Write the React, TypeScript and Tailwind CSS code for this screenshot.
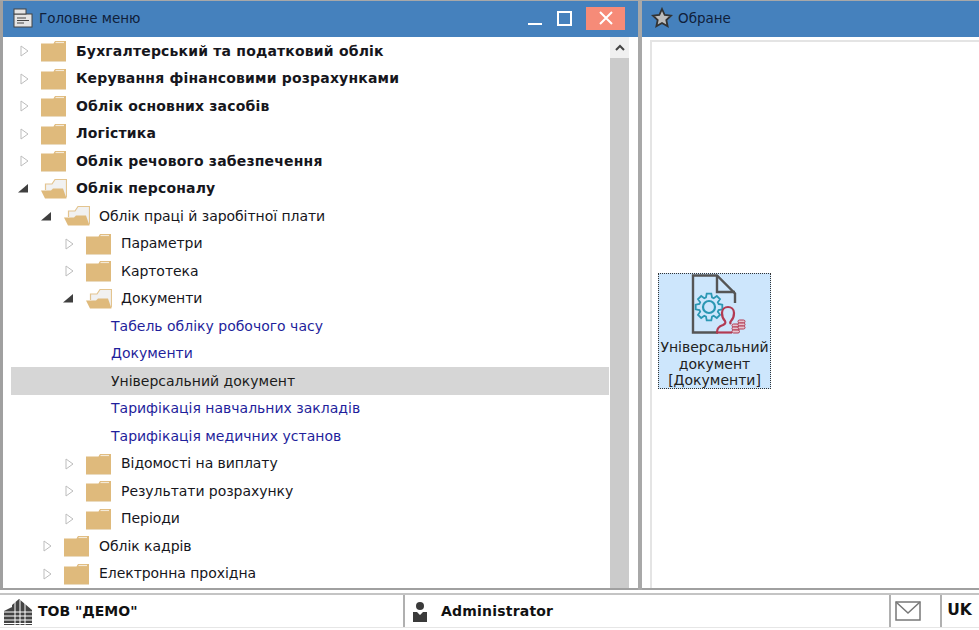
import type { ReactNode } from "react";

type Row = {
  label: string;
  depth: number;
  kind: "closed" | "open" | "leaf";
  bold?: boolean;
  selected?: boolean;
};

const rows: Row[] = [
  { label: "Бухгалтерський та податковий облік", depth: 0, kind: "closed", bold: true },
  { label: "Керування фінансовими розрахунками", depth: 0, kind: "closed", bold: true },
  { label: "Облік основних засобів", depth: 0, kind: "closed", bold: true },
  { label: "Логістика", depth: 0, kind: "closed", bold: true },
  { label: "Облік речового забезпечення", depth: 0, kind: "closed", bold: true },
  { label: "Облік персоналу", depth: 0, kind: "open", bold: true },
  { label: "Облік праці й заробітної плати", depth: 1, kind: "open" },
  { label: "Параметри", depth: 2, kind: "closed" },
  { label: "Картотека", depth: 2, kind: "closed" },
  { label: "Документи", depth: 2, kind: "open" },
  { label: "Табель обліку робочого часу", depth: 3, kind: "leaf" },
  { label: "Документи", depth: 3, kind: "leaf" },
  { label: "Універсальний документ", depth: 3, kind: "leaf", selected: true },
  { label: "Тарифікація навчальних закладів", depth: 3, kind: "leaf" },
  { label: "Тарифікація медичних установ", depth: 3, kind: "leaf" },
  { label: "Відомості на виплату", depth: 2, kind: "closed" },
  { label: "Результати розрахунку", depth: 2, kind: "closed" },
  { label: "Періоди", depth: 2, kind: "closed" },
  { label: "Облік кадрів", depth: 1, kind: "closed" },
  { label: "Електронна прохідна", depth: 1, kind: "closed" },
];

// outline of a cog, 8 teeth
function gearPath(cx: number, cy: number, inner: number, outer: number) {
  const pts: string[] = [];
  for (let i = 0; i < 8; i++) {
    const a = (i * Math.PI) / 4;
    [
      [-0.3, inner],
      [-0.17, outer],
      [0.17, outer],
      [0.3, inner],
    ].forEach(([off, r]) => {
      pts.push(`${(cx + r * Math.cos(a + off)).toFixed(1)} ${(cy + r * Math.sin(a + off)).toFixed(1)}`);
    });
  }
  return `M${pts.join("L")}z`;
}

function ClosedFolder() {
  return (
    <svg width="26" height="22" viewBox="0 0 26 22" className="shrink-0">
      <path d="M0 3.500h12.500l1.500-2.500H25v20H0z" fill="#dfba7c" />
      <path d="M14.500 2.500h8.500" stroke="#f4ead8" strokeWidth="1.200" />
      <path d="M0 21.500h25" stroke="#eadbc0" />
    </svg>
  );
}

function OpenFolder() {
  return (
    <svg width="26" height="22" viewBox="0 0 26 22" className="shrink-0">
      <path d="M4.500 12V6h6.500l3-4.500h11.500v18" fill="#f1f1f1" stroke="#e3c48f" strokeWidth="1.200" />
      <path d="M0 12.500h10l2-2h10L25.500 20.500H4z" fill="#dfba7c" />
    </svg>
  );
}

function Arrow({ open }: { open: boolean }) {
  if (open) {
    return (
      <svg width="10" height="9" viewBox="0 0 10 9" className="shrink-0 -ml-[1px]">
        <path d="M0 8.500h10V0z" fill="#3f3f3f" />
      </svg>
    );
  }
  return (
    <svg width="9" height="12" viewBox="0 0 9 12" className="shrink-0 ml-[1px]">
      <path d="M1 1l7 5-7 5z" fill="#fff" stroke="#bdbdbd" />
    </svg>
  );
}

function TreeRow({ row }: { row: Row }) {
  const indent = [0, 23, 45, 0][row.depth];
  if (row.kind === "leaf") {
    return (
      <div
        className={`h-[27.5px] shrink-0 flex items-center pl-[100px] pt-[1px] ${
          row.selected ? "bg-[#d6d6d6] text-[#1c1c1c]" : "text-[#1f1f9c]"
        }`}
      >
        {row.label}
      </div>
    );
  }
  return (
    <div className="h-[27.5px] shrink-0 flex items-center pt-[1px] text-[#16161c]" style={{ paddingLeft: indent }}>
      <div className="w-[30px] pl-[8px] flex items-center justify-start">
        <Arrow open={row.kind === "open"} />
      </div>
      {row.kind === "open" ? <OpenFolder /> : <ClosedFolder />}
      <span className={`ml-[9px] ${row.bold ? "font-bold tracking-[0.18px]" : "tracking-[-0.05px]"}`}>{row.label}</span>
    </div>
  );
}

function TitleBar({ children }: { children: ReactNode }) {
  return (
    <div className="h-[36px] shrink-0 bg-[#4581bd] flex items-center pb-[2px] text-[#10203a] text-[13.5px]">
      {children}
    </div>
  );
}

function DocIcon() {
  return (
    <svg width="58" height="64" viewBox="0 0 58 64">
      <path d="M29 60.500H4V3.500h24l18 18V31" fill="none" stroke="#555" strokeWidth="2.400" />
      <path d="M28 3.500V20h18" fill="none" stroke="#555" strokeWidth="2.400" />
      <path d={gearPath(20, 35, 10, 13.500)} fill="#cde6fc" stroke="#2b97b3" strokeWidth="1.800" />
      <circle cx="20" cy="35" r="6" fill="none" stroke="#2b97b3" strokeWidth="2.200" />
      <path
        d="M28 60c0-4 3-6 6-7 2-1 3-2 2-4-2-2-3-5-3-8 0-4 3-6 6-6s6 2 6 6c0 3-1 6-3 8-1 1-1 2 0 3"
        fill="#cde6fc"
        stroke="#b23a52"
        strokeWidth="2.200"
      />
      <path d="M27 60.500h16" stroke="#b23a52" strokeWidth="2.200" />
      <g fill="#e6c3ce" stroke="#b23a52" strokeWidth="1">
        <rect x="43" y="52" width="7.500" height="3" rx="1.500" />
        <rect x="43" y="55" width="7.500" height="3" rx="1.500" />
        <rect x="43" y="58" width="7.500" height="3" rx="1.500" />
        <rect x="49" y="48" width="7" height="3" rx="1.500" />
        <rect x="49" y="51" width="7" height="3" rx="1.500" />
        <rect x="49" y="54" width="7" height="3" rx="1.500" />
      </g>
    </svg>
  );
}

export default function App() {
  return (
    <div className="w-[979px] h-[630px] overflow-hidden bg-white flex flex-col font-['DejaVu_Sans',Verdana,sans-serif] text-[14px]">
      <div className="h-[590px] shrink-0 flex border-t border-[#a8a8a8]">
        {/* Головне меню */}
        <div className="w-[638px] shrink-0 flex flex-col border-l-[3px] border-b-[2px] border-[#a0a0a0]">
          <TitleBar>
            <svg width="20" height="20" viewBox="0 0 20 20" className="ml-[10px] shrink-0">
              <rect x="1" y="6" width="18" height="13" fill="#e4e4e4" stroke="#444" />
              <rect x="1" y="1" width="12" height="5" fill="#e4e4e4" stroke="#444" />
              <path d="M4 10h9M4 12.500h12M4 15h7" stroke="#444" />
            </svg>
            <span className="ml-[6px] flex-1">Головне меню</span>
            <div className="w-[14px] h-[2px] bg-white mt-[11px] mr-[15px]" />
            <div className="w-[15px] h-[15px] border-[2px] border-white mr-[14px]" />
            <div className="w-[39px] h-[23px] bg-[#f68b78] flex items-center justify-center mr-[13px]">
              <svg width="14" height="14" viewBox="0 0 14 14">
                <path d="M1 1l12 12M13 1L1 13" stroke="#fff" strokeWidth="2" />
              </svg>
            </div>
          </TitleBar>
          <div className="flex-1 min-h-0 flex">
            <div className="w-[607px] shrink-0 flex flex-col overflow-hidden pl-[8px] pr-[1px]">
              {rows.map((r, i) => (
                <TreeRow key={i} row={r} />
              ))}
            </div>
            <div className="w-[19px] shrink-0 flex flex-col">
              <div className="h-[21px] bg-[#f0f0f0] flex items-center justify-center">
                <svg width="10" height="7" viewBox="0 0 10 7">
                  <path d="M1 6l4-4 4 4" fill="none" stroke="#444" strokeWidth="2" />
                </svg>
              </div>
              <div className="flex-1 bg-[#cbcbcb]" />
            </div>
          </div>
        </div>

        {/* Splitter */}
        <div className="w-[4px] shrink-0 bg-[#a8a8a8]" />

        {/* Обране */}
        <div className="flex-1 flex flex-col border-b-[2px] border-[#a0a0a0]">
          <TitleBar>
            <svg width="22" height="22" viewBox="0 0 22 22" className="ml-[9px] shrink-0">
              <path
                d="M11 2l2.700 6 6.300.7-4.700 4.300 1.300 6.300L11 16l-5.600 3.300 1.300-6.300L2 8.700 8.300 8z"
                fill="#bdbdbd"
                stroke="#333"
                strokeWidth="1.800"
              />
            </svg>
            <span className="ml-[5px]">Обране</span>
          </TitleBar>
          <div className="flex-1 min-h-0 pt-[3px] pl-[8px]">
            <div className="h-full border-l-[2px] border-t-[2px] border-[#e4e4e4] pt-[231px] pl-[6px]">
              <div className="w-[113px] h-[116px] bg-[#cde6fc] border border-dotted border-[#333] flex flex-col items-center text-[#222] leading-[16.5px] text-center">
                <div className="h-[65px] shrink-0 ml-[7px] -mt-[2px] mb-[2px]">
                  <DocIcon />
                </div>
                <div className="whitespace-nowrap">Універсальний</div>
                <div>документ</div>
                <div>[Документи]</div>
              </div>
            </div>
          </div>
        </div>
      </div>

      {/* Status bar */}
      <div className="h-[35px] mt-[3px] shrink-0 border-t-[2px] border-b border-t-[#c4c4c4] border-b-[#e6e6e6] flex text-[#111]">
        <div className="w-[405px] shrink-0 flex items-center pt-[1px] font-bold border-r-[2px] border-[#b0b0b0]">
          <svg width="30" height="28" viewBox="0 0 30 28" className="ml-[3px] shrink-0">
            <path d="M1 13l8-4v18H1zM9 7l7-6 6 5 7 6v15H9z" fill="#444" />
            <path d="M1 14h28M1 18h28M1 22h28M1 25.500h28M12 4v23M17 2v25M22 5v22" stroke="#fff" strokeWidth="1" />
          </svg>
          <span className="ml-[5px]">ТОВ "ДЕМО"</span>
        </div>
        <div className="flex-1 flex items-center pt-[1px] font-bold">
          <svg width="16" height="22" viewBox="0 0 16 22" className="ml-[7px] shrink-0">
            <circle cx="8" cy="5" r="4" fill="#3a3a3a" />
            <path d="M1 11h4l3 3 3-3h4v10H1z" fill="#3a3a3a" />
          </svg>
          <span className="ml-[13px] tracking-[0.2px]">Administrator</span>
        </div>
        <div className="w-[53px] shrink-0 flex items-center pl-[4px] border-l-[2px] border-r-[2px] border-[#b0b0b0]">
          <svg width="26" height="20" viewBox="0 0 26 20">
            <rect x="1" y="1" width="24" height="18" fill="none" stroke="#777" strokeWidth="1.500" />
            <path d="M1 1l12 11L25 1" fill="none" stroke="#777" strokeWidth="1.500" />
          </svg>
        </div>
        <div className="w-[37px] shrink-0 flex items-center justify-center pr-[2px] font-bold text-[15.5px]">UK</div>
      </div>
    </div>
  );
}
